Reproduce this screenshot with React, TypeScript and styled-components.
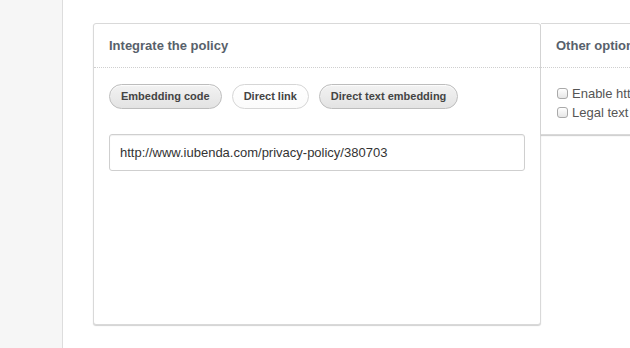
import React from "react";
import styled, { createGlobalStyle } from "styled-components";

const Global = createGlobalStyle`
  html, body { margin: 0; padding: 0; background: #fff; }
  body { font-family: "Liberation Sans", Arial, sans-serif; }
  * { box-sizing: border-box; }
`;

const Page = styled.div`
  display: flex;
  height: 348px;
  width: 630px;
  overflow: hidden;
`;

const Sidebar = styled.div`
  flex: 0 0 63px;
  background: #f6f6f6;
  border-right: 1px solid #dddddd;
`;

const Main = styled.div`
  flex: 1;
  display: flex;
  align-items: flex-start;
  padding: 23px 0 0 30px;
  min-width: 0;
`;

const Card = styled.div<{ $width: number; $height: number; $joined?: boolean }>`
  flex: 0 0 ${(p) => p.$width}px;
  height: ${(p) => p.$height}px;
  background: #fff;
  border: 1px solid #d9d9d9;
  border-left-width: ${(p) => (p.$joined ? 0 : 1)}px;
  border-radius: ${(p) => (p.$joined ? "0" : "3px")};
  box-shadow: 0 1px 1px rgba(0, 0, 0, 0.18);
  display: flex;
  flex-direction: column;
`;

const CardHeader = styled.div`
  height: 44px;
  padding: 0 15px;
  border-bottom: 1px dotted #cfcfcf;
  font-size: 13px;
  font-weight: bold;
  color: #58616b;
  line-height: 43px;
  white-space: nowrap;
`;

const CardBody = styled.div`
  padding: 16px 15px 15px;
`;

const ButtonRow = styled.div`
  display: flex;
  gap: 10px;
`;

const Pill = styled.button<{ $active?: boolean }>`
  height: 25px;
  padding: 0 11px;
  border-radius: 13px;
  border: 1px solid ${(p) => (p.$active ? "#bdbdbd" : "#d6d6d6")};
  background: ${(p) =>
    p.$active
      ? "linear-gradient(#f2f2f2, #e3e3e3)"
      : "linear-gradient(#ffffff, #fbfbfb)"};
  box-shadow: ${(p) =>
    p.$active ? "inset 0 1px 1px rgba(255,255,255,0.8)" : "none"};
  font-family: "Liberation Sans", Arial, sans-serif;
  font-size: 11px;
  font-weight: bold;
  color: #444;
  line-height: 23px;
  white-space: nowrap;
  cursor: pointer;
`;

const UrlInput = styled.input`
  display: block;
  margin-top: 25px;
  width: 416px;
  height: 37px;
  padding: 0 10px;
  border: 1px solid #cfcfcf;
  border-radius: 3px;
  box-shadow: inset 0 1px 1px rgba(0, 0, 0, 0.06);
  font-family: "Liberation Sans", Arial, sans-serif;
  font-size: 13px;
  color: #333;
  outline: none;
`;

const OptionList = styled.div`
  display: flex;
  flex-direction: column;
  padding: 16px 15px 0;
`;

const OptionRow = styled.label`
  display: flex;
  align-items: center;
  gap: 4px;
  height: 19px;
  font-size: 13px;
  color: #555;
  white-space: nowrap;
`;

const Check = styled.input`
  appearance: none;
  margin: 0 0 0 1px;
  width: 11px;
  height: 11px;
  border: 1px solid #a9a9a9;
  border-radius: 3px;
  background: linear-gradient(#ffffff, #e6e6e6);
`;

export default function App() {
  return (
    <>
      <Global />
      <Page>
        <Sidebar />
        <Main>
          <Card $width={448} $height={302}>
            <CardHeader>Integrate the policy</CardHeader>
            <CardBody>
              <ButtonRow>
                <Pill $active>Embedding code</Pill>
                <Pill>Direct link</Pill>
                <Pill $active>Direct text embedding</Pill>
              </ButtonRow>
              <UrlInput readOnly value="http://www.iubenda.com/privacy-policy/380703" />
            </CardBody>
          </Card>
          <Card $width={260} $height={112} $joined>
            <CardHeader>Other options</CardHeader>
            <OptionList>
              <OptionRow>
                <Check type="checkbox" />
                Enable https
              </OptionRow>
              <OptionRow>
                <Check type="checkbox" />
                Legal text only
              </OptionRow>
            </OptionList>
          </Card>
        </Main>
      </Page>
    </>
  );
}
